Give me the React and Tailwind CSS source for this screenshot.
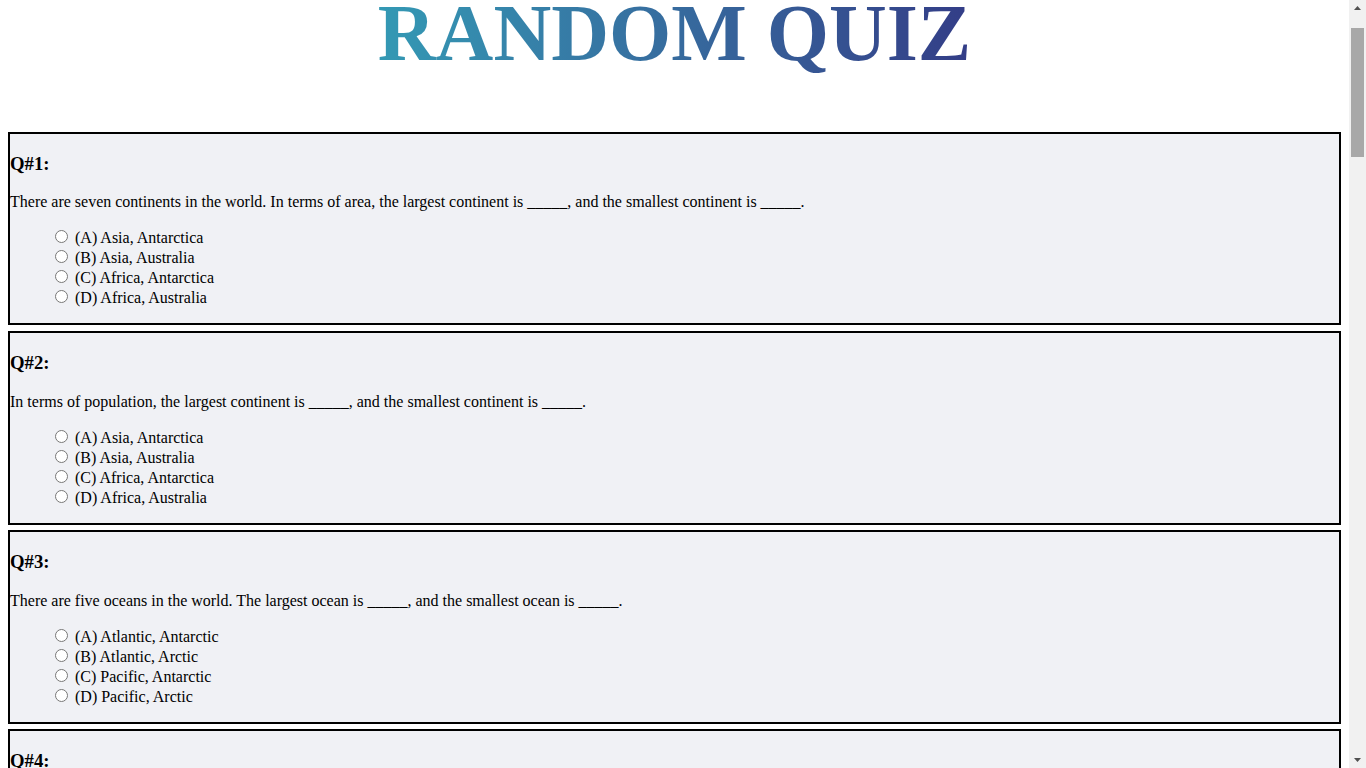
const QUESTIONS = [
  {
    text: 'There are seven continents in the world. In terms of area, the largest continent is _____, and the smallest continent is _____.',
    options: ['(A) Asia, Antarctica', '(B) Asia, Australia', '(C) Africa, Antarctica', '(D) Africa, Australia'],
  },
  {
    text: 'In terms of population, the largest continent is _____, and the smallest continent is _____.',
    options: ['(A) Asia, Antarctica', '(B) Asia, Australia', '(C) Africa, Antarctica', '(D) Africa, Australia'],
  },
  {
    text: 'There are five oceans in the world. The largest ocean is _____, and the smallest ocean is _____.',
    options: ['(A) Atlantic, Antarctic', '(B) Atlantic, Arctic', '(C) Pacific, Antarctic', '(D) Pacific, Arctic'],
  },
  {
    text: 'The longest river in the world is _____, and the largest desert in the world is _____.',
    options: ['(A) Nile, Sahara', '(B) Nile, Gobi', '(C) Amazon, Sahara', '(D) Amazon, Gobi'],
  },
  {
    text: 'The highest mountain in the world is _____, and it is located in _____.',
    options: ['(A) Mount Everest, Asia', '(B) Mount Everest, Africa', '(C) K2, Asia', '(D) Kilimanjaro, Africa'],
  },
]

function Question({ num, text, options }) {
  return (
    <div className="border-2 border-black bg-[#f0f1f5] mb-[5.67px]">
      <h3 className="text-[18.72px] font-bold my-[18.72px]">Q#{num}:</h3>
      <p className="my-[16px]">{text}</p>
      <ul className="pl-[40px] my-[16px] list-none">
        {options.map((opt) => (
          <li key={opt}>
            <label>
              <input type="radio" name={`q${num}`} className="m-[3px_3px_0_5px]" /> {opt}
            </label>
          </li>
        ))}
      </ul>
    </div>
  )
}

function ScrollBar() {
  return (
    <div className="w-[17px] shrink-0 h-full bg-[#f1f1f1] flex flex-col items-center">
      <div className="h-[17px] w-full flex items-center justify-center">
        <svg width="7" height="4" viewBox="0 0 7 4" className="mb-[2px]">
          <path d="M3.5 0L7 4H0z" fill="#505050" />
        </svg>
      </div>
      <div className="h-[11px]" />
      <div className="w-[13px] h-[129px] bg-[#a8a8a8]" />
      <div className="flex-1" />
      <div className="h-[17px] w-full flex items-center justify-center">
        <svg width="7" height="4" viewBox="0 0 7 4" className="mt-[1px]">
          <path d="M0 0H7L3.5 4z" fill="#505050" />
        </svg>
      </div>
    </div>
  )
}

export default function App() {
  return (
    <div className="flex h-screen bg-white text-black text-[16px] leading-[normal] font-['Liberation_Serif',serif]">
      <div className="flex-1 min-w-0 overflow-hidden p-[8px]">
        {/* Title */}
        <div className="h-[124px] flow-root text-center">
          <h1 className="mt-[-15px] text-[80px] leading-none font-bold">
            <span className="bg-gradient-to-r from-[#3399b4] to-[#333d87] bg-clip-text text-transparent">
              RANDOM QUIZ
            </span>
          </h1>
        </div>

        {QUESTIONS.map((q, i) => (
          <Question key={i} num={i + 1} text={q.text} options={q.options} />
        ))}
      </div>
      <ScrollBar />
    </div>
  )
}
